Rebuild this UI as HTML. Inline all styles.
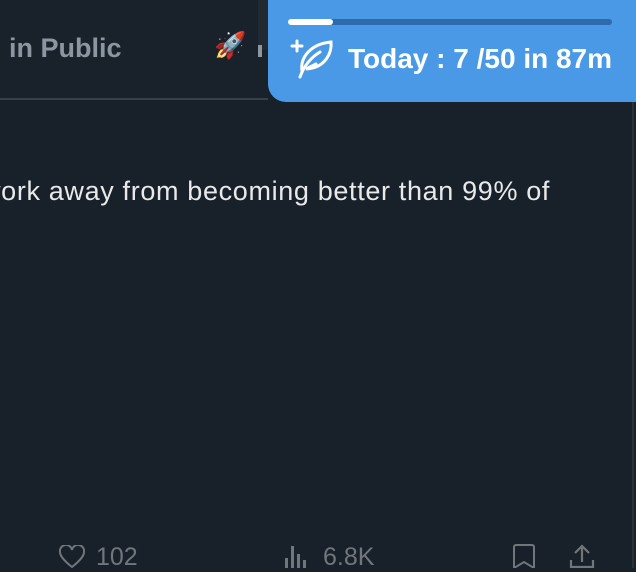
<!DOCTYPE html>
<html><head><style>
*{margin:0;padding:0;box-sizing:border-box}
body{width:636px;height:568px;overflow:hidden;background:#18202a;font-family:"Liberation Sans",sans-serif;position:relative}
.hdr{position:absolute;left:0;top:0;width:268px;height:100px;background:#19212b;border-bottom:2px solid #38414b}
.strip{position:absolute;left:258px;top:0;width:12px;height:50px;background:#212932}
.pub{position:absolute;left:9px;top:33px;font-size:27px;font-weight:bold;color:#8b96a1}
.rocket{position:absolute;left:214px;top:30px;font-size:26px}
.panel{position:absolute;left:268px;top:0;width:368px;height:102px;background:#4a99e6;border-bottom-left-radius:18px}
.track{position:absolute;left:20px;top:19px;width:324px;height:6px;border-radius:3px;background:#2f6bab}
.fill{position:absolute;left:0;top:0;width:45px;height:6px;border-radius:3px;background:#fff}
.today{position:absolute;left:80px;top:43px;font-size:28px;font-weight:bold;color:#fff;white-space:nowrap}
.txt{position:absolute;left:-19px;top:176px;font-size:27px;letter-spacing:0.65px;color:#e7e9ea;white-space:nowrap}
.act{position:absolute;top:543px;font-size:25px;color:#71767b}
</style></head><body>
<div class="hdr"></div>
<div class="strip"></div>
<div class="pub">in Public</div>
<div class="rocket">🚀</div>
<div style="position:absolute;left:258px;top:45px;width:4px;height:12px;background:#8b96a1"></div>
<div class="panel">
<div class="track"><div class="fill"></div></div>
<svg style="position:absolute;left:22px;top:38px" width="46" height="42" viewBox="0 0 46 42" fill="none" stroke="#fff" stroke-width="3" stroke-linecap="round">
<path d="M2 8h10M7 3v10"/>
<path d="M10 39 C14 28 20 20 30 14"/>
<path d="M12 33 C10 20 20 6 41 4 C42 14 36 30 16 31 L26 26"/>
</svg>
<div class="today">Today : 7 /50 in 87m</div>
</div>
<div class="txt">work away from becoming better than 99% of</div>
<svg style="position:absolute;left:58px;top:545px" width="28" height="24" viewBox="0 0 28 24" fill="none" stroke="#71767b" stroke-width="2"><path d="M14 22 C4 14 2 10 2 7 A6 6 0 0 1 14 5 A6 6 0 0 1 26 7 C26 10 24 14 14 22Z"/></svg>
<div class="act" style="left:96px">102</div>
<svg style="position:absolute;left:284px;top:544px" width="22" height="24" viewBox="0 0 22 24" fill="#71767b"><rect x="1" y="14" width="3" height="10"/><rect x="7" y="2" width="3" height="22"/><rect x="13" y="10" width="3" height="14"/><rect x="19" y="16" width="3" height="8"/></svg>
<div class="act" style="left:323px">6.8K</div>
<svg style="position:absolute;left:512px;top:544px" width="24" height="24" viewBox="0 0 24 24" fill="none" stroke="#71767b" stroke-width="2"><path d="M2 24V3a2 2 0 0 1 2-2h16a2 2 0 0 1 2 2v21l-10-6z"/></svg>
<svg style="position:absolute;left:568px;top:544px" width="28" height="24" viewBox="0 0 28 24" fill="none" stroke="#71767b" stroke-width="2.2"><path d="M14 2v16M7 9l7-7 7 7M3 16v7h22v-7"/></svg>
<div style="position:absolute;left:632px;top:102px;width:2px;height:466px;background:#2a323c"></div>
</body></html>
